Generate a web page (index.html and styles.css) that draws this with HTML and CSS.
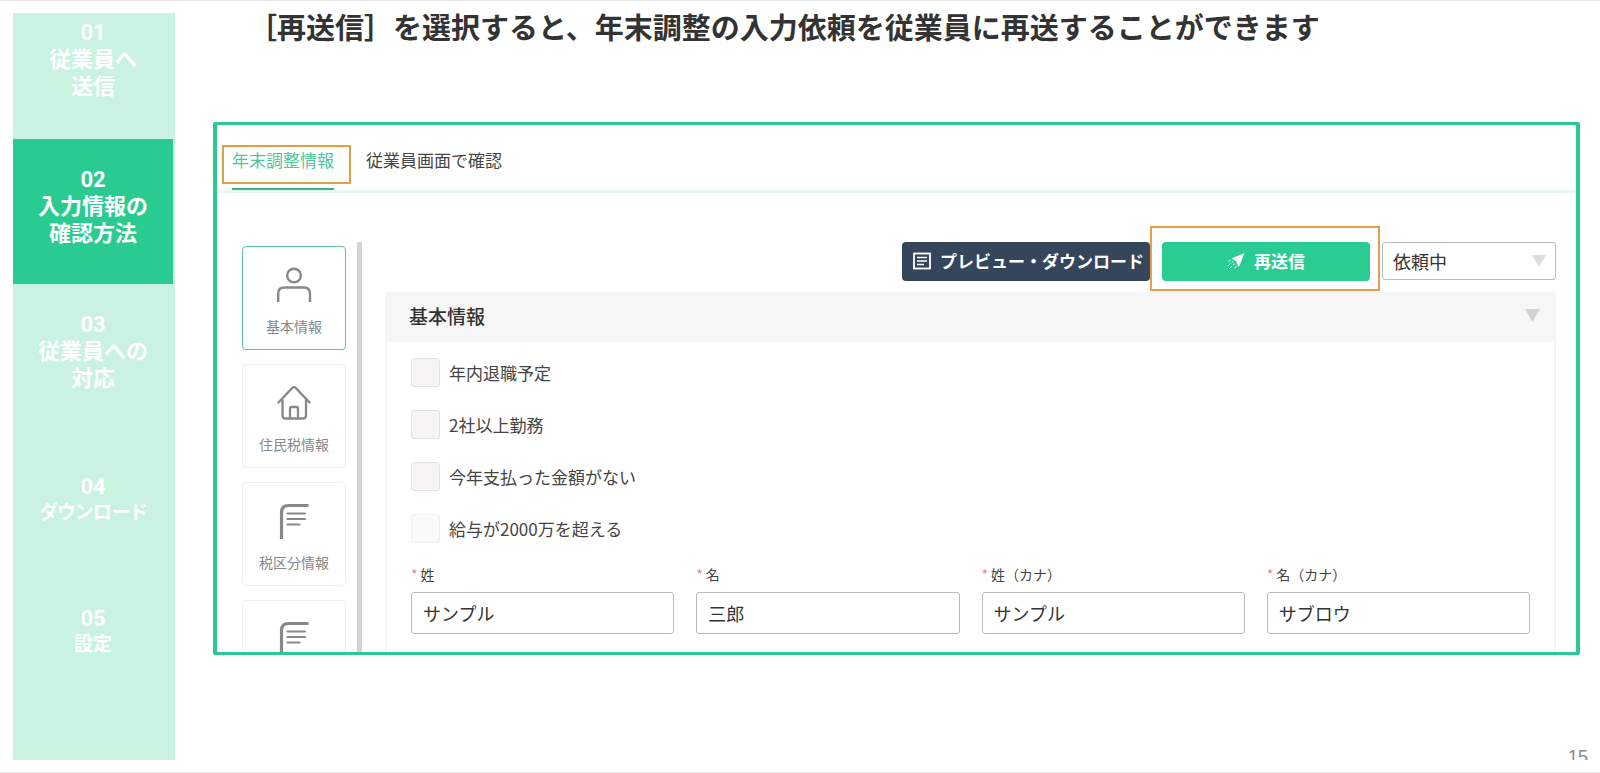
FILE: index.html
```html
<!DOCTYPE html>
<html lang="ja">
<head>
<meta charset="utf-8">
<meta name="viewport" content="width=device-width, initial-scale=1">
<title>年末調整の入力依頼の再送信</title>
<link rel="stylesheet" href="styles.css">
</head>
<body>
<svg class="sprite" aria-hidden="true">
  <symbol id="icon-form" viewBox="0 0 36 36">
    <path d="M5.500 36V9.500q0-7 7-7H32.500" fill="none" stroke="currentColor" stroke-width="3.200"/>
    <path d="M11.500 10.500h17.500M11.500 16h17.500M11.500 21.500h12" fill="none" stroke="currentColor" stroke-width="2.200" stroke-linecap="round"/>
  </symbol>
</svg>
<div class="page">
  <ol class="steps">
    <li class="step step-first"><span>01</span><span>従業員へ</span><span>送信</span></li>
    <li class="step step-active" aria-current="step"><span>02</span><span>入力情報の</span><span>確認方法</span></li>
    <li class="step"><span>03</span><span>従業員への</span><span>対応</span></li>
    <li class="step step-short"><span>04</span><span>ダウンロード</span></li>
    <li class="step step-short"><span>05</span><span>設定</span></li>
  </ol>
  <main class="main">
    <h1 class="title">［再送信］を選択すると、年末調整の入力依頼を従業員に再送することができます</h1>
    <section class="frame">
      <nav class="tabs">
        <a class="tab tab-current" href="#info"><span class="tab-label">年末調整情報</span></a>
        <a class="tab" href="#employee"><span class="tab-label">従業員画面で確認</span></a>
      </nav>
      <div class="content">
        <nav class="cards">
          <a class="card card-current" href="#basic">
            <svg class="card-icon" viewBox="0 0 36 36" aria-hidden="true"><g fill="none" stroke="currentColor" stroke-width="2.400"><circle cx="18" cy="8.500" r="6.800"/><path d="M2.200 35V26.500q0-6 6-6H28q6 0 6 6V35"/></g></svg>
            <span>基本情報</span>
          </a>
          <a class="card" href="#resident">
            <svg class="card-icon" viewBox="0 0 36 36" aria-hidden="true"><g fill="none" stroke="currentColor" stroke-width="2.300" stroke-linejoin="round" stroke-linecap="round"><path d="M2.500 17.500L16.300 2.900q1.700-1.600 3.400 0L33.500 17.500"/><path d="M6.500 15V30.500q0 3 3 3H27q3 0 3-3V15"/><path d="M14 33V23.500q0-1.500 1.500-1.500H20.500q1.500 0 1.500 1.500V33"/></g></svg>
            <span>住民税情報</span>
          </a>
          <a class="card" href="#tax">
            <svg class="card-icon" aria-hidden="true"><use href="#icon-form"/></svg>
            <span>税区分情報</span>
          </a>
          <a class="card" href="#next" aria-label="次の項目">
            <svg class="card-icon" aria-hidden="true"><use href="#icon-form"/></svg>
          </a>
        </nav>
        <div class="scrollbar"></div>
        <div class="detail">
          <div class="actions">
            <button class="button button-dark" type="button">
              <svg class="button-icon" viewBox="0 0 18 18" aria-hidden="true"><g fill="none" stroke="currentColor"><rect x="1" y="1.500" width="16" height="15" stroke-width="1.800"/><path d="M4 5.500h10M4 9h10M4 12.500h7" stroke-width="1.500"/></g></svg>
              プレビュー・ダウンロード
            </button>
            <div class="highlight">
              <button class="button button-green" type="button">
                <svg class="button-icon" viewBox="0 0 18 18" aria-hidden="true"><path d="M17.500 1L4.500 6.500l4.500 2.500 2 5.500 1.500-.8z" fill="currentColor"/><path d="M6.500 9L4.800 10.500M3.500 11.500L1 13.800M8 11.500L6 13.200M4.800 14.200L2.500 16.500M9.500 14L7.500 16.500M3.500 8L1.500 9.800" fill="none" stroke="currentColor" stroke-width="1"/></svg>
                再送信
              </button>
            </div>
            <div class="select-box">
              <select class="select" aria-label="状態"><option>依頼中</option></select>
              <svg class="select-arrow" viewBox="0 0 14 12" aria-hidden="true"><path d="M0 0h14L7 12z"/></svg>
            </div>
          </div>
          <section class="panel">
            <header class="panel-head">
              <h2 class="panel-title">基本情報</h2>
              <svg class="panel-arrow" viewBox="0 0 14 12" aria-hidden="true"><path d="M0 0h14L7 12z"/></svg>
            </header>
            <form class="panel-body">
              <div class="checks">
                <label class="check"><input type="checkbox">年内退職予定</label>
                <label class="check"><input type="checkbox">2社以上勤務</label>
                <label class="check"><input type="checkbox">今年支払った金額がない</label>
                <label class="check check-faint"><input type="checkbox">給与が2000万を超える</label>
              </div>
              <div class="fields">
                <div class="field"><label for="sei"><span class="required">*</span>姓</label><input id="sei" type="text" value="サンプル"></div>
                <div class="field"><label for="mei"><span class="required">*</span>名</label><input id="mei" type="text" value="三郎"></div>
                <div class="field"><label for="sei-kana"><span class="required">*</span>姓（カナ）</label><input id="sei-kana" type="text" value="サンプル"></div>
                <div class="field"><label for="mei-kana"><span class="required">*</span>名（カナ）</label><input id="mei-kana" type="text" value="サブロウ"></div>
              </div>
            </form>
          </section>
        </div>
      </div>
    </section>
    <footer class="footer"><span class="page-number">15</span></footer>
  </main>
</div>
</body>
</html>
```

FILE: styles.css
```css
* {
  box-sizing: border-box;
}

body {
  margin: 0;
  background: #fff;
  color: #333;
  font-family: "Noto Sans CJK JP", sans-serif;
}

a {
  color: inherit;
  text-decoration: none;
}

.sprite {
  position: absolute;
  width: 0;
  height: 0;
}

.page {
  display: flex;
  gap: 38px;
  height: 100vh;
  padding: 12px 12px 12px 13px;
  border-top: 1px solid #e8e8e8;
  border-bottom: 1px solid #e8e8e8;
}

/* Step column */
.steps {
  flex: none;
  width: 162px;
  margin: 0;
  padding: 0;
  list-style: none;
  background: #c9f2e1;
}

.step {
  display: flex;
  flex-direction: column;
  align-items: center;
  height: 145px;
  margin-right: 2px;
  padding-top: 27px;
  color: #fff;
  font-family: Roboto, "Noto Sans CJK JP", sans-serif;
  font-size: 22px;
  font-weight: 700;
  line-height: 27px;
}

.step-first {
  height: 126px;
  padding-top: 6px;
}

.step-active {
  background: #2acb90;
}

.step-short {
  height: 132px;
  padding-top: 45px;
  line-height: 26px;
}

.step-short span + span {
  font-size: 19px;
  font-feature-settings: "palt";
}

/* Main column */
.main {
  display: flex;
  flex: 1;
  flex-direction: column;
  min-width: 0;
}

.title {
  flex: none;
  margin: 0 0 83px;
  padding-left: 35px;
  font-size: 29px;
  font-weight: 700;
  line-height: 26px;
}

.frame {
  flex: 1;
  min-height: 0;
  margin-right: 8px;
  overflow: hidden;
  border: 3px solid #2bc98f;
  border-width: 3px 4px;
  border-radius: 2px;
}

.tabs {
  display: flex;
  gap: 15px;
  height: 68px;
  padding: 20px 5px 0;
  border-bottom: 3px solid #e6f8f1;
  font-size: 17px;
}

.tab {
  position: relative;
  height: 45px;
  color: #444;
}

.tab-label {
  display: block;
  height: 39px;
  line-height: 30px;
}

.tab-current {
  color: #4fc79b;
}

.tab-current .tab-label {
  padding: 0 15px 0 8px;
  border: 2px solid #e0a045;
  line-height: 26px;
}

.tab-current::after {
  position: absolute;
  right: 17px;
  bottom: 0;
  left: 10px;
  height: 2px;
  background: #3fb48c;
  content: "";
}

.content {
  display: flex;
  padding: 49px 20px 0 25px;
}

.cards {
  display: flex;
  flex: none;
  flex-direction: column;
  gap: 14px;
  width: 104px;
  padding-top: 4px;
}

.card {
  display: flex;
  flex-direction: column;
  align-items: center;
  gap: 13px;
  height: 104px;
  padding-top: 20px;
  border: 1px solid #f0f0f0;
  border-radius: 4px;
  color: #888;
  font-size: 14px;
  line-height: 20px;
}

.card-current {
  border-color: #5cc5a0;
}

.card-icon {
  width: 36px;
  height: 36px;
}

.scrollbar {
  flex: none;
  width: 5px;
  margin: 0 23px 0 11px;
  background: #d4d4d4;
}

.detail {
  flex: 1;
  min-width: 0;
}

.actions {
  display: flex;
  justify-content: flex-end;
  height: 39px;
  margin-bottom: 11px;
}

.button {
  display: flex;
  align-items: center;
  gap: 9px;
  height: 39px;
  padding: 0 0 2px;
  border: 0;
  border-radius: 4px;
  color: #fff;
  font-family: inherit;
  font-size: 17px;
  font-weight: 700;
  white-space: nowrap;
}

.button-icon {
  flex: none;
  width: 18px;
  height: 18px;
}

.button-dark {
  width: 248px;
  padding-left: 11px;
  background: #34455c;
}

.button-green {
  justify-content: center;
  width: 208px;
  background: #29cc91;
}

.highlight {
  height: 65px;
  margin: -16px 2px 0 0;
  padding: 14px 8px 0 10px;
  border: 2px solid #e5a047;
}

.select-box {
  position: relative;
  width: 174px;
  height: 38px;
}

.select {
  width: 100%;
  height: 100%;
  padding: 0 10px;
  appearance: none;
  border: 1px solid #bbb;
  border-radius: 3px;
  background: #fff;
  color: #333;
  font-family: inherit;
  font-size: 18px;
}

.select-arrow {
  position: absolute;
  top: 13px;
  right: 10px;
  width: 14px;
  height: 12px;
  fill: #dedede;
  pointer-events: none;
}

.panel-head {
  display: flex;
  align-items: center;
  justify-content: space-between;
  height: 50px;
  padding: 0 16px 3px 24px;
  border-radius: 4px 4px 0 0;
  background: #f6f6f6;
}

.panel-title {
  margin: 0;
  font-size: 19px;
  font-weight: 500;
  line-height: 30px;
}

.panel-arrow {
  width: 15px;
  height: 13px;
  fill: #d2d2d2;
}

.panel-body {
  padding: 16px 24px 40px;
  border: 2px solid #f5f5f5;
  border-width: 0 2px;
}

.checks {
  display: flex;
  flex-direction: column;
  align-items: flex-start;
  gap: 23px;
}

.check {
  display: flex;
  align-items: center;
  gap: 9px;
  height: 29px;
  color: #444;
  font-size: 17px;
  line-height: 20px;
}

.check input {
  width: 29px;
  height: 29px;
  margin: 0;
  appearance: none;
  border: 1px solid #e4e1e1;
  border-radius: 3px;
  background: #f6f4f4;
}

.check-faint input {
  border-color: #f0f0f0;
  background: #fafafa;
}

.fields {
  display: grid;
  grid-template-columns: repeat(4, 1fr);
  gap: 22px;
  margin-top: 21px;
}

.field {
  display: flex;
  flex-direction: column;
  gap: 8px;
  min-width: 0;
}

.field label {
  display: flex;
  gap: 3px;
  color: #444;
  font-size: 14px;
  line-height: 20px;
}

.required {
  color: #ee7f8a;
}

.field input {
  width: 100%;
  height: 42px;
  padding: 0 11px;
  border: 1px solid #bbb;
  border-radius: 3px;
  color: #333;
  font-family: inherit;
  font-size: 18px;
}

.footer {
  display: flex;
  flex: none;
  align-items: flex-end;
  justify-content: flex-end;
  height: 105px;
}

.page-number {
  height: 14px;
  overflow: hidden;
  color: #888;
  font-family: "Liberation Sans", sans-serif;
  font-size: 18px;
  line-height: 22px;
}
```
